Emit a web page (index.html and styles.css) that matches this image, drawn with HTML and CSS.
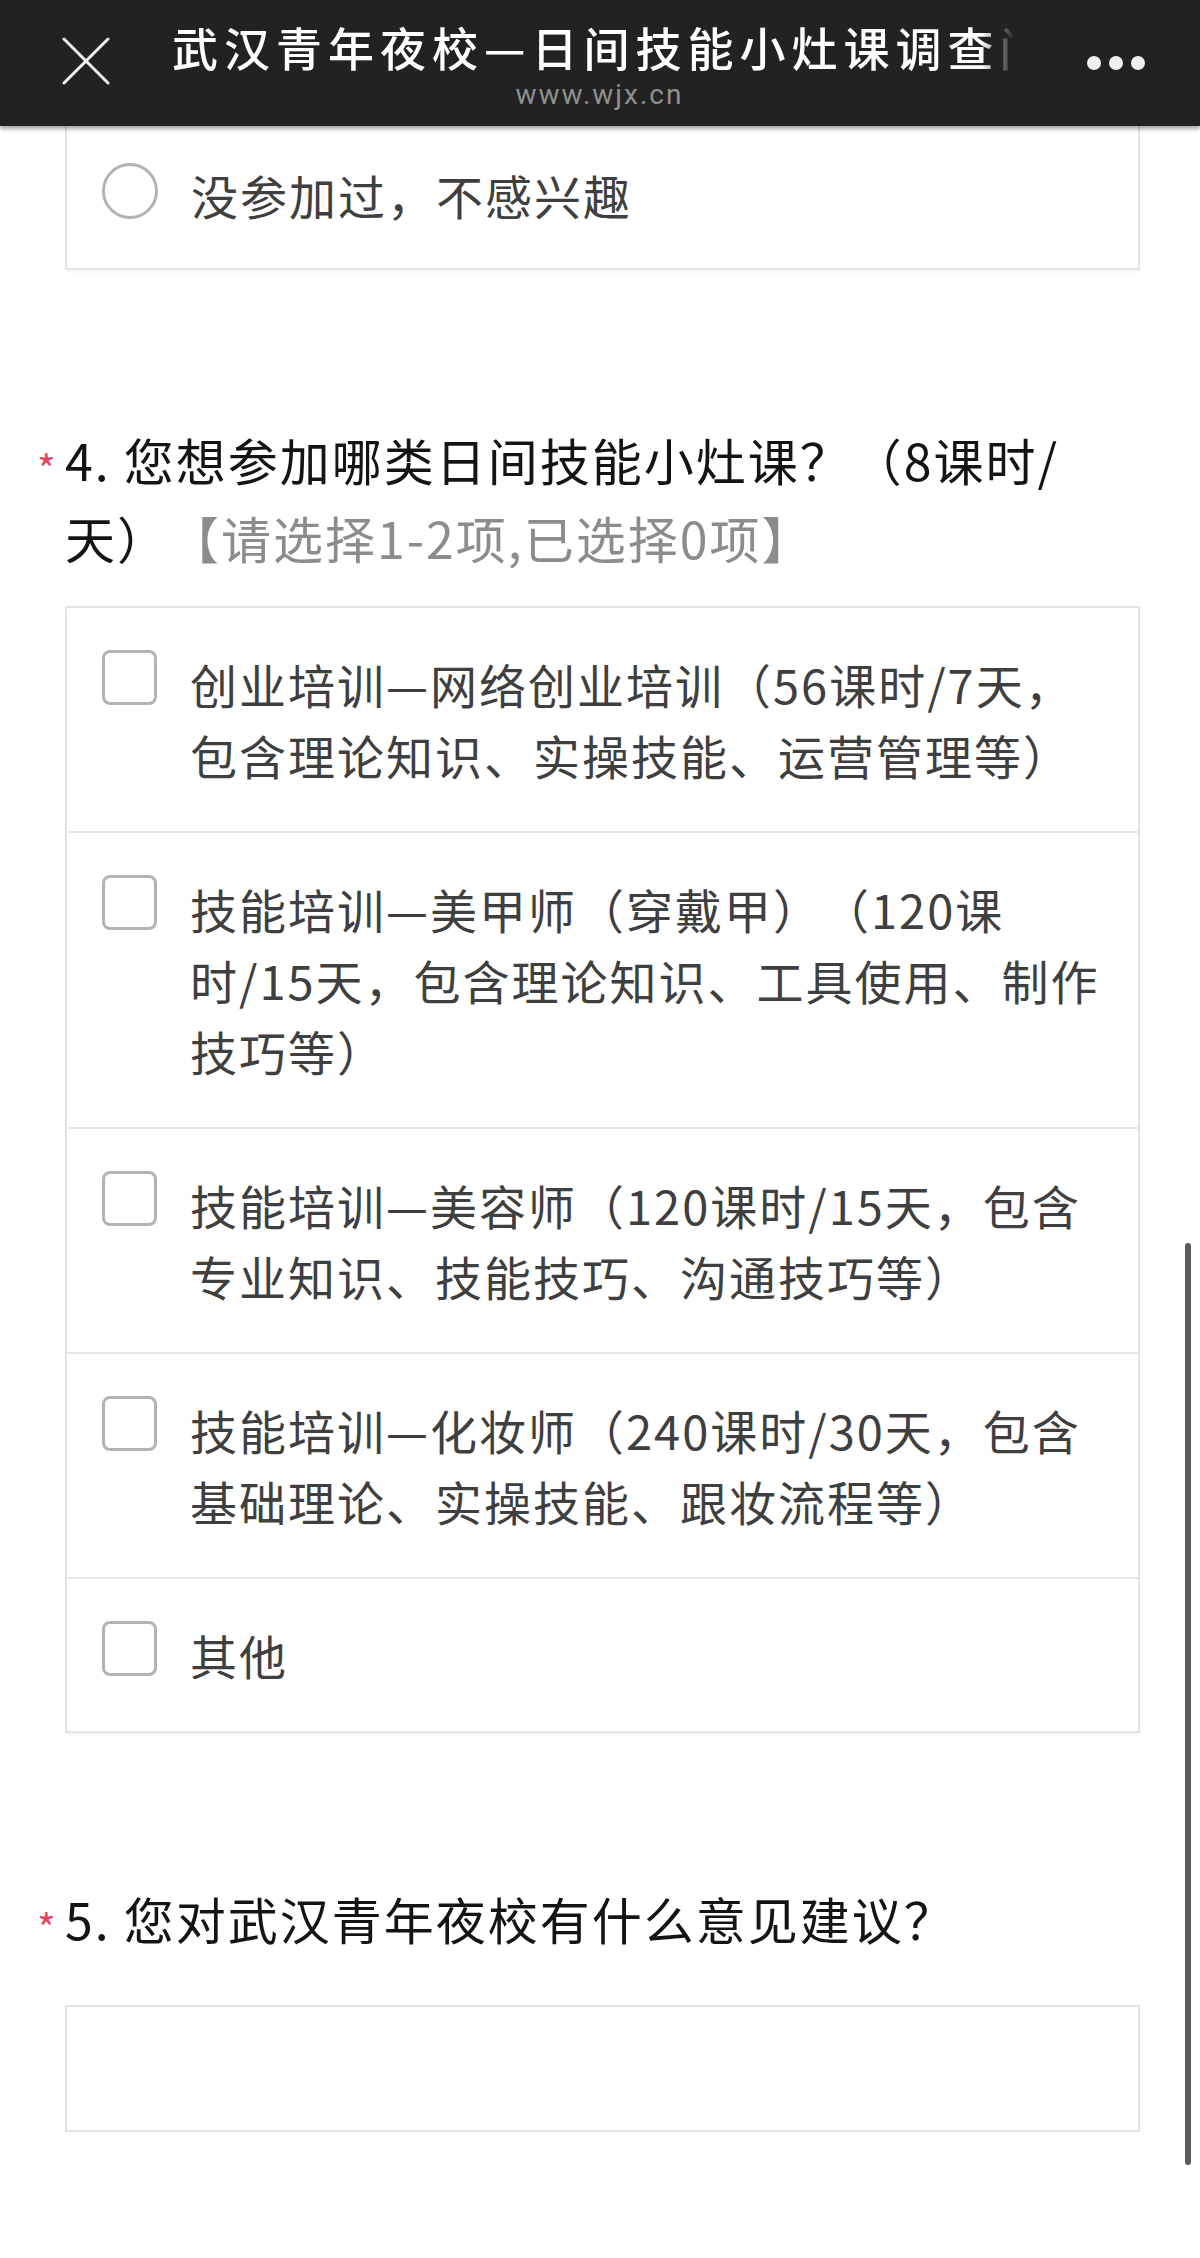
FILE: index.html
```html
<!DOCTYPE html>
<html>

<head>
  <meta charset="utf-8">
  <meta name="viewport" content="width=device-width">
  <title>武汉青年夜校—日间技能小灶课调查问卷</title>
  <link rel="stylesheet" href="styles.css">
</head>

<body>
  <header class="topbar">
    <svg class="close-icon" width="48" height="48" viewBox="0 0 48 48">
      <line x1="2" y1="2" x2="46" y2="46" />
      <line x1="46" y1="2" x2="2" y2="46" />
    </svg>
    <div class="title-wrap">
      <div class="title">武汉青年夜校—日间技能小灶课调查问卷</div>
      <div class="url">www.wjx.cn</div>
    </div>
    <div class="more">
      <span></span><span></span><span></span>
    </div>
  </header>

  <main class="page">
    <!-- 第3题 (上半部分已滚出) -->
    <div class="options options-cut">
      <div class="option">
        <span class="radio"></span>
        <span class="option-text">没参加过，不感兴趣</span>
      </div>
    </div>

    <div class="question">
      <span class="req">*</span>
      <div class="q-text">4. 您想参加哪类日间技能小灶课？（8课时/天）<span class="hint">【请选择1-2项,已选择0项】</span></div>
    </div>
    <div class="options">
      <div class="option">
        <span class="check"></span>
        <span class="option-text">创业培训—网络创业培训（56课时/7天，包含理论知识、实操技能、运营管理等）</span>
      </div>
      <div class="option">
        <span class="check"></span>
        <span class="option-text">技能培训—美甲师（穿戴甲）（120课时/15天，包含理论知识、工具使用、制作技巧等）</span>
      </div>
      <div class="option">
        <span class="check"></span>
        <span class="option-text">技能培训—美容师（120课时/15天，包含专业知识、技能技巧、沟通技巧等）</span>
      </div>
      <div class="option">
        <span class="check"></span>
        <span class="option-text">技能培训—化妆师（240课时/30天，包含基础理论、实操技能、跟妆流程等）</span>
      </div>
      <div class="option">
        <span class="check"></span>
        <span class="option-text">其他</span>
      </div>
    </div>

    <div class="question q5">
      <span class="req">*</span>
      <div class="q-text">5. 您对武汉青年夜校有什么意见建议？</div>
    </div>
    <textarea class="answer"></textarea>
  </main>

  <div class="scroll-thumb"></div>
</body>

</html>
```

FILE: styles.css
```css
body {
  margin: 0;
  background-color: #ffffff;
  font-family: "Noto Sans CJK SC", "Noto Sans", sans-serif;
  color: #1a1a1a;
  text-spacing-trim: space-all;
}

/* 顶部栏 */
.topbar {
  position: relative;
  z-index: 1;
  height: 126px;
  display: flex;
  align-items: center;
  padding: 0 55px 0 62px;
  background-color: #222222;
  box-shadow: 0 3px 4px rgba(0, 0, 0, 0.35);
}

.close-icon {
  flex-shrink: 0;
  margin-top: -4px;
}

.close-icon line {
  stroke: #f2f2f2;
  stroke-width: 3;
  stroke-linecap: round;
}

.title-wrap {
  align-self: stretch;
  width: 856px;
  margin-left: 62px;
  padding-top: 16px;
  box-sizing: border-box;
}

.title {
  height: 60px;
  width: 842px;
  line-height: 60px;
  font-size: 46px;
  font-weight: 500;
  letter-spacing: 6px;
  color: #ffffff;
  white-space: nowrap;
  overflow: hidden;
  -webkit-mask-image: linear-gradient(to right, #000 810px, transparent 842px);
  mask-image: linear-gradient(to right, #000 810px, transparent 842px);
}

.url {
  margin-top: 4px;
  line-height: 30px;
  font-size: 28px;
  letter-spacing: 2px;
  font-family: Roboto, "Noto Sans", sans-serif;
  color: #8f8f8f;
  text-align: center;
}

.more {
  display: flex;
  gap: 8px;
  margin-left: 60px;
}

.more span {
  width: 14px;
  height: 14px;
  border-radius: 50%;
  background-color: #f0f0f0;
}

/* 问卷内容 */
.page {
  padding: 0 60px 0 65px;
}

.options {
  width: 1075px;
  box-sizing: border-box;
  border: 2px solid #e4e4e4;
  box-shadow: 0 2px 3px rgba(0, 0, 0, 0.05);
  margin-top: 30px;
}

.options-cut {
  border-top: none;
  margin-top: 0;
}

.option {
  display: flex;
  align-items: flex-start;
  padding: 40px 0 41px 35px;
}

.option + .option {
  border-top: 2px solid #e6e6e6;
}

.options-cut .option {
  padding-top: 33px;
  padding-bottom: 38px;
}

.check,
.radio {
  flex-shrink: 0;
  box-sizing: border-box;
  width: 55px;
  height: 55px;
  border: 3px solid #b3b3b3;
  border-radius: 8px;
  margin-top: 2px;
}

.radio {
  width: 56px;
  height: 56px;
  border-radius: 50%;
  margin-top: 4px;
}

.option-text {
  width: 922px;
  margin-left: 33px;
  font-size: 47px;
  letter-spacing: 2px;
  line-height: 71px;
  color: #3f3f3f;
}

.question {
  display: flex;
  align-items: flex-start;
  margin: 150px 0 0 -28px;
}

.q5 {
  margin-top: 146px;
}

.req {
  width: 28px;
  flex-shrink: 0;
  margin-top: 28px;
  font-size: 40px;
  line-height: 1;
  color: #e0465e;
}

.q-text {
  width: 1040px;
  font-size: 50px;
  letter-spacing: 2px;
  line-height: 78px;
  color: #141414;
}

.hint {
  color: #8c8c8c;
}

.answer {
  display: block;
  width: 1075px;
  height: 127px;
  box-sizing: border-box;
  margin-top: 48px;
  border: 2px solid #e4e4e4;
  border-radius: 0;
  box-shadow: 0 2px 3px rgba(0, 0, 0, 0.05);
  resize: none;
  font-family: inherit;
}

/* 滚动条 */
.scroll-thumb {
  position: absolute;
  left: 1185px;
  top: 1243px;
  width: 6px;
  height: 922px;
  border-radius: 3px;
  background-color: #5c5c5c;
}
```
